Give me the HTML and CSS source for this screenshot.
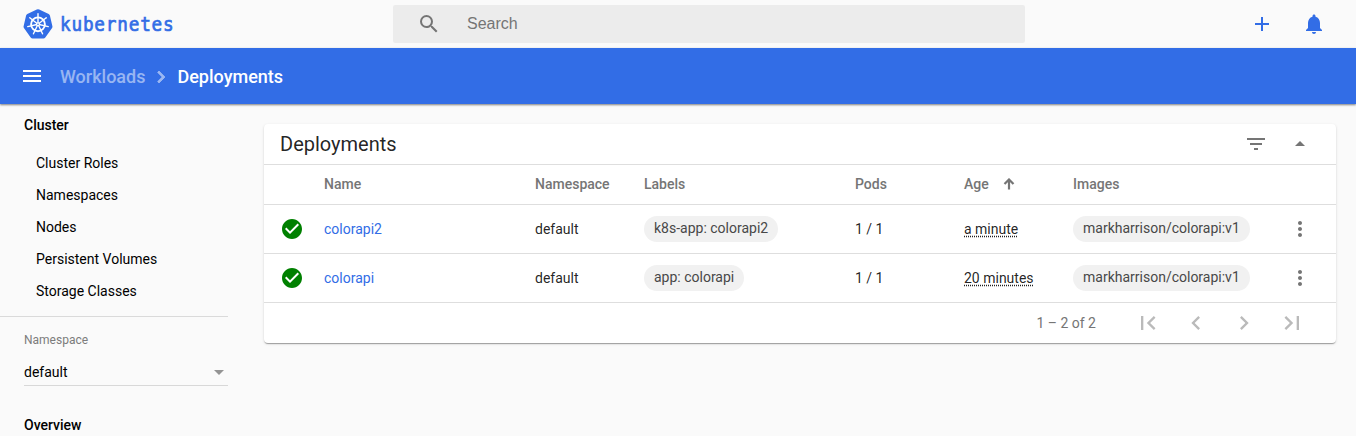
FILE: index.html
```html
<!DOCTYPE html>
<html lang="en">
<head>
<meta charset="utf-8">
<title>Kubernetes Dashboard</title>
<link rel="stylesheet" href="styles.css">
</head>
<body>
<header class="topbar">
  <a class="brand">
    <svg class="brand-logo" width="30" height="30" viewBox="0 0 30 30">
      <path d="M13.8.5a2.8 2.8 0 0 1 2.4 0l9.5 4.5a2.2 2.2 0 0 1 1.2 1.6l2.5 10.6a2.4 2.4 0 0 1-.5 2L22.300 28.500a2.500 2.500 0 0 1-1.900 1H9.600a2.500 2.500 0 0 1-1.900-1L1.100 19.200a2.400 2.400 0 0 1-.5-2L3.100 6.600A2.200 2.200 0 0 1 4.300 5z" fill="#326de6"/>
      <g stroke="#fff" fill="none" stroke-linecap="round">
        <circle cx="15" cy="15.300" r="6.900" stroke-width="1.900"/>
        <g stroke-width="1.400">
          <path d="M15 15.300V4.800"/>
          <path d="M15 15.300V4.800" transform="rotate(51.430 15 15.300)"/>
          <path d="M15 15.300V4.800" transform="rotate(102.860 15 15.300)"/>
          <path d="M15 15.300V4.800" transform="rotate(154.290 15 15.300)"/>
          <path d="M15 15.300V4.800" transform="rotate(205.710 15 15.300)"/>
          <path d="M15 15.300V4.800" transform="rotate(257.140 15 15.300)"/>
          <path d="M15 15.300V4.800" transform="rotate(308.570 15 15.300)"/>
        </g>
      </g>
      <circle cx="15" cy="15.300" r="2" fill="#fff"/>
      <circle cx="15" cy="15.300" r=".8" fill="#326de6"/>
    </svg>
    <span class="brand-name">kubernetes</span>
  </a>
  <div class="search">
    <svg class="icon" viewBox="0 0 24 24"><path d="M15.500 14h-.79l-.28-.27A6.471 6.471 0 0 0 16 9.500 6.500 6.500 0 1 0 9.500 16c1.610 0 3.090-.59 4.230-1.570l.27.28v.79l5 4.990L20.490 19l-4.990-5zm-6 0C7.010 14 5 11.990 5 9.500S7.010 5 9.500 5 14 7.010 14 9.500 11.990 14 9.500 14z"/></svg>
    <span class="search-text">Search</span>
  </div>
  <div class="actions">
    <svg class="icon" viewBox="0 0 24 24"><path d="M19 13h-6v6h-2v-6H5v-2h6V5h2v6h6v2z"/></svg>
    <svg class="icon" viewBox="0 0 24 24"><path d="M12 22c1.100 0 2-.9 2-2h-4c0 1.100.89 2 2 2zm6-6v-5c0-3.070-1.640-5.640-4.500-6.320V4c0-.83-.67-1.500-1.500-1.500s-1.500.67-1.500 1.500v.68C7.630 5.360 6 7.920 6 11v5l-2 2v1h16v-1l-2-2z"/></svg>
  </div>
</header>
<div class="crumbs">
  <svg class="icon" viewBox="0 0 24 24"><path d="M3 18h18v-2H3v2zm0-5h18v-2H3v2zm0-7v2h18V6H3z"/></svg>
  <span class="crumb-parent">Workloads</span>
  <svg class="crumb-sep" viewBox="0 0 24 24"><path d="M10 6L8.590 7.410 13.170 12l-4.580 4.590L10 18l6-6z"/></svg>
  <span class="crumb-current">Deployments</span>
</div>
<div class="layout">
  <nav class="sidebar">
    <div class="nav-group">Cluster</div>
    <div class="nav-list">
      <a class="nav-item">Cluster Roles</a>
      <a class="nav-item">Namespaces</a>
      <a class="nav-item">Nodes</a>
      <a class="nav-item">Persistent Volumes</a>
      <a class="nav-item">Storage Classes</a>
    </div>
    <div class="nav-divider"></div>
    <div class="ns-label">Namespace</div>
    <div class="ns-select"><span>default</span><span class="ns-arrow"></span></div>
    <div class="nav-group nav-overview">Overview</div>
  </nav>
  <main class="card">
    <div class="card-head">
      <h1 class="card-title">Deployments</h1>
      <svg class="icon" viewBox="0 0 24 24"><path d="M10 18h4v-2h-4v2zM3 6v2h18V6H3zm3 7h12v-2H6v2z"/></svg>
      <svg class="icon" viewBox="0 0 24 24"><path d="M7 14l5-5 5 5z"/></svg>
    </div>
    <div class="row row-head">
      <span></span><span>Name</span><span>Namespace</span><span>Labels</span><span>Pods</span>
      <span class="sorted">Age <svg class="sort-arrow" viewBox="0 0 12 12"><path d="M6 11.500V1.500M1.500 6L6 1.500 10.500 6"/></svg></span>
      <span>Images</span><span></span>
    </div>
    <div class="row">
      <svg class="icon status" viewBox="0 0 24 24"><path d="M12 2C6.480 2 2 6.480 2 12s4.480 10 10 10 10-4.480 10-10S17.520 2 12 2zm-2 15l-5-5 1.410-1.410L10 14.170l7.590-7.590L19 8l-9 9z"/></svg>
      <a class="link">colorapi2</a><span>default</span><span><span class="chip">k8s-app: colorapi2</span></span><span>1 / 1</span>
      <span><span class="age">a minute</span></span><span><span class="chip">markharrison/colorapi:v1</span></span>
      <svg class="icon" viewBox="0 0 24 24"><path d="M12 8c1.100 0 2-.9 2-2s-.9-2-2-2-2 .9-2 2 .9 2 2 2zm0 2c-1.100 0-2 .9-2 2s.9 2 2 2 2-.9 2-2-.9-2-2-2zm0 6c-1.100 0-2 .9-2 2s.9 2 2 2 2-.9 2-2-.9-2-2-2z"/></svg>
    </div>
    <div class="row">
      <svg class="icon status" viewBox="0 0 24 24"><path d="M12 2C6.480 2 2 6.480 2 12s4.480 10 10 10 10-4.480 10-10S17.520 2 12 2zm-2 15l-5-5 1.410-1.410L10 14.170l7.590-7.590L19 8l-9 9z"/></svg>
      <a class="link">colorapi</a><span>default</span><span><span class="chip">app: colorapi</span></span><span>1 / 1</span>
      <span><span class="age">20 minutes</span></span><span><span class="chip">markharrison/colorapi:v1</span></span>
      <svg class="icon" viewBox="0 0 24 24"><path d="M12 8c1.100 0 2-.9 2-2s-.9-2-2-2-2 .9-2 2 .9 2 2 2zm0 2c-1.100 0-2 .9-2 2s.9 2 2 2 2-.9 2-2-.9-2-2-2zm0 6c-1.100 0-2 .9-2 2s.9 2 2 2 2-.9 2-2-.9-2-2-2z"/></svg>
    </div>
    <div class="pager">
      <span class="range">1 – 2 of 2</span>
      <svg class="page-icon" viewBox="0 0 24 24"><path d="M18.410 16.590L13.820 12l4.590-4.590L17 6l-6 6 6 6zM6 6h2v12H6z"/></svg>
      <svg class="page-icon" viewBox="0 0 24 24"><path d="M15.410 7.410L14 6l-6 6 6 6 1.410-1.410L10.830 12z"/></svg>
      <svg class="page-icon" viewBox="0 0 24 24"><path d="M10 6L8.590 7.410 13.170 12l-4.580 4.590L10 18l6-6z"/></svg>
      <svg class="page-icon" viewBox="0 0 24 24"><path d="M5.590 7.410L10.180 12l-4.590 4.590L7 18l6-6-6-6zM16 6h2v12h-2z"/></svg>
    </div>
  </main>
</div>
</body>
</html>
```
FILE: styles.css
```css
* { box-sizing: border-box; }
body {
  margin: 0;
  height: 436px;
  overflow: hidden;
  background: #fafafa;
  color: rgba(0, 0, 0, .87);
  font: 14px/20px Roboto, sans-serif;
}
.icon { width: 24px; height: 24px; fill: currentColor; flex: none; display: block; }

.topbar { display: flex; height: 48px; }
.brand { display: flex; align-items: center; width: 393px; padding-left: 23px; color: #326de6; }
.brand-name {
  margin-left: 7px;
  font: 20px/30px "DejaVu Sans Mono", monospace;
  letter-spacing: .9px;
  -webkit-text-stroke: .7px #326de6;
  transform: scaleX(.885);
  transform-origin: 0 50%;
}
.search {
  display: flex;
  align-items: center;
  width: 632px;
  height: 38px;
  margin-top: 5px;
  padding-left: 24px;
  border-radius: 2px;
  background: #ececec;
  color: #757575;
}
.search-text { margin-left: 26px; font: 16px/20px "Liberation Sans", Arial, sans-serif; }
.actions { display: flex; align-items: center; gap: 28px; margin-left: auto; padding-right: 30px; color: #326de6; }

.crumbs {
  display: flex;
  align-items: center;
  height: 56px;
  padding-left: 20px;
  background: #326de6;
  color: #fff;
  font-size: 18px;
  font-weight: 500;
  box-shadow: 0 1px 2px rgba(0, 0, 0, .5);
}
.crumb-parent, .crumb-current { padding-top: 2px; }
.crumb-parent { margin-left: 16px; color: rgba(255, 255, 255, .5); }
.crumb-sep { width: 24px; height: 24px; margin: 1px 4px 0; fill: rgba(255, 255, 255, .5); stroke: rgba(255, 255, 255, .5); stroke-width: .6; }

.layout { display: flex; align-items: flex-start; }
.sidebar { width: 264px; padding-top: 11px; color: #000; }
.nav-group { padding-left: 24px; font-weight: 500; }
.nav-list { padding: 12px 0 9px 36px; }
.nav-item { display: block; line-height: 32px; }
.nav-divider { width: 228px; height: 1px; background: #dadada; }
.ns-label { padding: 13px 0 0 24px; font-size: 12px; color: #7c7c7c; }
.ns-select {
  display: flex;
  align-items: center;
  justify-content: space-between;
  width: 204px;
  height: 28px;
  margin: 8px 0 0 24px;
  padding-right: 4px;
  border-bottom: 1px solid #d8d8d8;
}
.ns-arrow { margin-top: 1px; border: 5px solid transparent; border-top-color: #949494; border-bottom: 0; }
.nav-overview { margin-top: 29px; }

.card {
  width: 1072px;
  margin-top: 20px;
  border-radius: 4px;
  background: #fff;
  box-shadow: 0 2px 1px -1px rgba(0, 0, 0, .2), 0 1px 1px rgba(0, 0, 0, .14), 0 1px 3px rgba(0, 0, 0, .12);
}
.card-head {
  display: flex;
  align-items: center;
  gap: 20px;
  height: 41px;
  padding: 0 24px 0 16px;
  border-bottom: 1px solid #dedede;
  color: #757575;
}
.card-title { flex: 1; margin: 0; font-size: 20px; font-weight: 400; color: rgba(0, 0, 0, .87); }
.row {
  display: grid;
  grid-template-columns: 44px 211px 109px 211px 109px 109px 215px 24px;
  align-items: center;
  height: 49px;
  padding-left: 16px;
  border-bottom: 1px solid #dedede;
}
.row > .icon { color: #757575; }
.row > .status { color: #008000; }
.row-head { height: 40px; padding-bottom: 1px; color: #757575; font-weight: 500; }
.sorted { display: flex; align-items: center; gap: 14px; }
.sort-arrow { width: 12px; height: 12px; fill: none; stroke: #757575; stroke-width: 2.2; }
.link { color: #326de6; }
.chip {
  display: block;
  width: max-content;
  height: 26px;
  padding: 0 10px;
  border-radius: 13px;
  background: #f1f1f1;
  color: #484848;
  line-height: 24px;
}
.age { text-decoration: underline dotted; text-underline-offset: 2px; text-decoration-skip-ink: none; }
.pager { display: flex; align-items: center; height: 40px; padding-right: 30px; justify-content: flex-end; gap: 20px; }
.range { margin-right: 18px; color: #757575; }
.page-icon { width: 28px; height: 28px; fill: #bababa; }
```
